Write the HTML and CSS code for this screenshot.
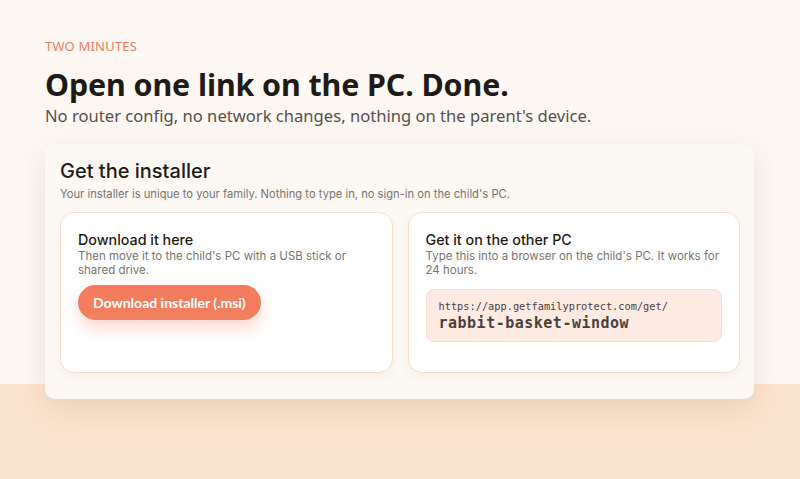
FILE: index.html
```html
<!DOCTYPE html>
<html lang="en">
<head>
  <meta charset="UTF-8">
  <title>Get the installer</title>
  <meta name="viewport" content="width=device-width, initial-scale=1.0">
  <link rel="stylesheet" href="styles.css">
</head>
<body>

  <section class="intro">
    <p class="eyebrow">TWO MINUTES</p>
    <h1>Open one link on the PC. Done.</h1>
    <p class="lead">No router config, no network changes, nothing on the parent's device.</p>
  </section>

  <section class="installer">
    <h2>Get the installer</h2>
    <p class="installer-note">Your installer is unique to your family. Nothing to type in, no sign-in on the child's PC.</p>

    <div class="options">
      <div class="option">
        <h3>Download it here</h3>
        <p>Then move it to the child's PC with a USB stick or shared drive.</p>
        <button class="download-btn">Download installer (.msi)</button>
      </div>

      <div class="option">
        <h3>Get it on the other PC</h3>
        <p>Type this into a browser on the child's PC. It works for 24 hours.</p>
        <div class="link-box">
          <span class="link-base">https://app.getfamilyprotect.com/get/</span>
          <span class="link-code">rabbit-basket-window</span>
        </div>
      </div>
    </div>
  </section>

  <div class="band"></div>

</body>
</html>
```

FILE: styles.css
```css
* {
  box-sizing: border-box;
  margin: 0;
  padding: 0;
}

html, body {
  height: 100%;
}

body {
  font-family: 'Noto Sans', sans-serif;
  background-color: #fdf8f4;
  color: #1f1a17;
  position: relative;
  overflow: hidden;
}

.band {
  position: absolute;
  left: 0;
  right: 0;
  top: 384px;
  bottom: 0;
  background-color: #fbe4cf;
  z-index: 0;
}

.intro {
  padding: 37px 45px 0;
}

.eyebrow {
  font-size: 13px;
  color: #f07c5e;
  letter-spacing: 0.2px;
  line-height: 18px;
}

h1 {
  font-size: 30.4px;
  font-weight: 700;
  line-height: 38px;
  margin-top: 11px;
  letter-spacing: -0.1px;
}

.lead {
  font-size: 16.6px;
  color: #57514d;
  line-height: 24px;
}

.installer {
  position: relative;
  z-index: 1;
  margin: 16px 46px 0 45px;
  background-color: #fcf8f4;
  border-radius: 10px;
  box-shadow: 0 10px 30px rgba(160, 110, 70, 0.18);
  padding: 14px 14px 26px 15px;
}

.installer h2 {
  font-family: 'Inter', sans-serif;
  font-size: 20px;
  font-weight: 500;
  line-height: 26px;
}

.installer-note {
  font-family: 'Inter', sans-serif;
  font-size: 11.2px;
  color: #7a746f;
  margin-top: 2px;
  line-height: 16px;
}

.options {
  display: grid;
  grid-template-columns: 1fr 1fr;
  gap: 15px;
  margin-top: 10px;
}

.option {
  background: #fff;
  border: 1px solid #f1dfcc;
  border-radius: 14px;
  padding: 18px 17px 0;
  height: 161px;
  box-shadow: 0 4px 10px rgba(160, 110, 70, 0.06);
}

.option h3 {
  font-family: 'Inter', sans-serif;
  font-size: 14.3px;
  font-weight: 500;
  line-height: 18px;
}

.option p {
  font-family: 'Inter', sans-serif;
  font-size: 11.5px;
  color: #7a746f;
  line-height: 14px;
}

.download-btn {
  margin-top: 8px;
  padding: 0 15px;
  height: 35px;
  border: none;
  border-radius: 18px;
  background: linear-gradient(180deg, #f47a5e, #f2805f);
  color: #fff;
  font-family: 'Lato', sans-serif;
  font-size: 14px;
  font-weight: 700;
  box-shadow: 0 8px 16px rgba(242, 120, 90, 0.3);
  cursor: pointer;
}

.link-box {
  margin-top: 12px;
  background-color: #fdebe3;
  border: 1px solid #f7ddd2;
  border-radius: 8px;
  padding: 8px 12px 9px;
  display: flex;
  flex-direction: column;
  font-family: 'DejaVu Sans Mono', monospace;
  color: #4a403b;
}

.link-base {
  font-size: 10.3px;
  line-height: 16px;
}

.link-code {
  font-size: 15px;
  font-weight: 700;
  line-height: 18px;
  letter-spacing: 0.5px;
}
```
